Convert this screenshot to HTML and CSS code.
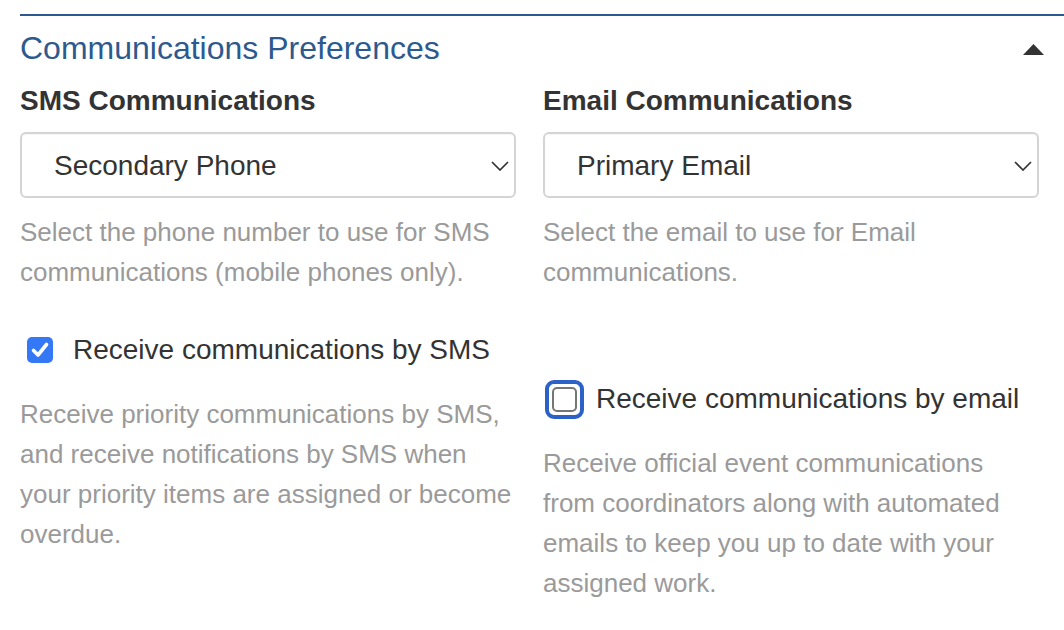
FILE: index.html
```html
<!DOCTYPE html>
<html lang="en">
<head>
<meta charset="utf-8">
<title>Communications Preferences</title>
<link rel="stylesheet" href="styles.css">
</head>
<body>
<section class="panel">
  <header class="panel-head">
    <h2 class="panel-title">Communications Preferences</h2>
    <svg class="caret" width="21" height="11" viewBox="0 0 21 11" aria-hidden="true"><polygon points="10.5,0 21,11 0,11" fill="#333"/></svg>
  </header>
  <div class="cols">
    <div class="col">
      <h3 class="field-label">SMS Communications</h3>
      <div class="select-wrap">
        <select class="select">
          <option>Secondary Phone</option>
          <option>Primary Phone</option>
        </select>
        <svg class="chevron" width="18" height="10" viewBox="0 0 18 10" aria-hidden="true"><polyline points="1,1 9,9 17,1" fill="none" stroke="#333" stroke-width="1.7"/></svg>
      </div>
      <p class="help">Select the phone number to use for SMS communications (mobile phones only).</p>
      <label class="check-row">
        <span class="box box-checked"><svg width="26" height="26" viewBox="0 0 26 26" aria-hidden="true"><polyline points="6.5,13.5 11,18 19.5,7.5" fill="none" stroke="#fff" stroke-width="3.6" stroke-linecap="round" stroke-linejoin="round"/></svg></span>
        <span class="check-text">Receive communications by SMS</span>
      </label>
      <p class="help desc">Receive priority communications by SMS, and receive notifications by SMS when your priority items are assigned or become overdue.</p>
    </div>
    <div class="col">
      <h3 class="field-label">Email Communications</h3>
      <div class="select-wrap">
        <select class="select">
          <option>Primary Email</option>
          <option>Secondary Email</option>
        </select>
        <svg class="chevron" width="18" height="10" viewBox="0 0 18 10" aria-hidden="true"><polyline points="1,1 9,9 17,1" fill="none" stroke="#333" stroke-width="1.7"/></svg>
      </div>
      <p class="help">Select the email to use for Email communications.</p>
      <label class="check-row check-row-low">
        <span class="focus-ring"><span class="box box-empty"></span></span>
        <span class="check-text">Receive communications by email</span>
      </label>
      <p class="help desc">Receive official event communications from coordinators along with automated emails to keep you up to date with your assigned work.</p>
    </div>
  </div>
</section>
</body>
</html>
```

FILE: styles.css
```css
html, body {
  margin: 0;
  padding: 0;
  background: #fff;
}

body {
  font-family: "Liberation Sans", Arial, Helvetica, sans-serif;
  color: #333;
  padding-top: 14px;
}

.panel {
  margin-left: 20px;
  border-top: 2px solid #2d5a8e;
}

.panel-head {
  display: flex;
  align-items: center;
  justify-content: space-between;
  margin-top: 12px;
  padding-right: 20px;
}

.panel-title {
  margin: 0;
  font-size: 32px;
  line-height: 40px;
  font-weight: normal;
  color: #2d5a8e;
}

.caret {
  display: block;
  margin-top: 2px;
}

.cols {
  display: grid;
  grid-template-columns: 496px 496px;
  column-gap: 27px;
  margin-top: 13px;
}

.col {
  display: flex;
  flex-direction: column;
}

.field-label {
  margin: 0 0 11px;
  font-size: 28px;
  line-height: 40px;
  font-weight: bold;
  color: #333;
}

.select-wrap {
  position: relative;
}

.select {
  -webkit-appearance: none;
  appearance: none;
  display: block;
  width: 100%;
  height: 66px;
  box-sizing: border-box;
  border: 2px solid #d4d4d4;
  border-radius: 6px;
  background: #fff;
  padding: 0 40px 0 32px;
  font-family: inherit;
  font-size: 28px;
  color: #333;
  box-shadow: inset 0 1px 1px rgba(0,0,0,0.04);
}

.chevron {
  position: absolute;
  right: 7px;
  top: 29px;
}

.help {
  margin: 14px 0 0;
  font-size: 26px;
  line-height: 40px;
  color: #9a9a9a;
}

.check-row {
  display: flex;
  align-items: center;
  height: 40px;
  margin-top: 38px;
  padding-left: 7px;
}

.check-row-low {
  margin-top: 87px;
  padding-left: 2px;
}

.box {
  display: block;
  width: 26px;
  height: 26px;
  box-sizing: border-box;
  border-radius: 5px;
  flex: none;
}

.box-checked {
  background: #3478f6;
}

.box-checked svg {
  display: block;
}

.focus-ring {
  display: block;
  flex: none;
  padding: 3px;
  border: 4px solid #2c62c8;
  border-radius: 9px;
}

.box-empty {
  width: 25px;
  height: 25px;
  border: 2px solid #767676;
  background: #fff;
}

.check-text {
  margin-left: 20px;
  font-size: 28px;
  line-height: 40px;
  color: #333;
}

.focus-ring + .check-text {
  margin-left: 12px;
}

.desc {
  margin-top: 24px;
}
```
